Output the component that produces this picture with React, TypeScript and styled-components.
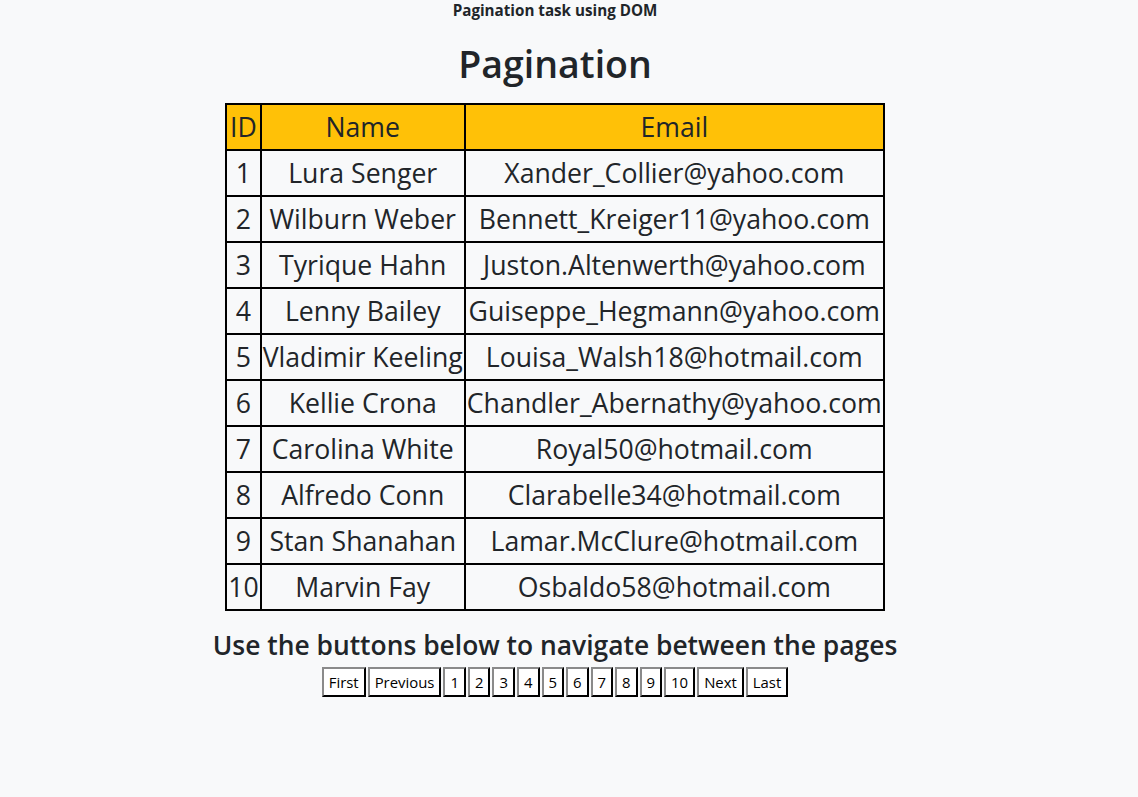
import React from "react";
import styled, { createGlobalStyle } from "styled-components";

const Global = createGlobalStyle`
  html, body { margin: 0; padding: 0; background: #f8f9fa; }
  body {
    font-family: "Open Sans", "Noto Sans", sans-serif;
    color: #212529;
  }
`;

const Page = styled.div`
  display: flex;
  flex-direction: column;
  align-items: center;
  padding-right: 28px;
`;

const TopTitle = styled.div`
  font-size: 15.2px;
  font-weight: 700;
  line-height: 21px;
`;

const Title = styled.h1`
  margin: 19px 0 15px;
  font-size: 37.5px;
  font-weight: 600;
  line-height: 48px;
`;

const Table = styled.table`
  border-collapse: collapse;
  font-size: 26.65px;
  line-height: 42px;
`;

const Th = styled.th`
  background: #ffc107;
  border: 2px solid #000;
  padding: 1px;
  font-weight: 400;
  text-align: center;
`;

const Td = styled.td`
  border: 2px solid #000;
  padding: 1px;
  text-align: center;
  white-space: nowrap;
`;

const SubTitle = styled.h4`
  margin: 19px 0 7px;
  font-size: 26.4px;
  font-weight: 600;
  line-height: 30px;
`;

const Pager = styled.div`
  display: flex;
  gap: 2px;
`;

const PageButton = styled.button`
  font-family: inherit;
  font-size: 14.9px;
  line-height: 21px;
  color: #000;
  background: #fff;
  border: 2px outset #767676;
  border-color: #8a8a8a #4a4a4a #4a4a4a #8a8a8a;
  padding: 3px 5px 2px;
  height: 30px;
  margin: 0;
  cursor: pointer;
`;

const rows: [number, string, string][] = [
  [1, "Lura Senger", "Xander_Collier@yahoo.com"],
  [2, "Wilburn Weber", "Bennett_Kreiger11@yahoo.com"],
  [3, "Tyrique Hahn", "Juston.Altenwerth@yahoo.com"],
  [4, "Lenny Bailey", "Guiseppe_Hegmann@yahoo.com"],
  [5, "Vladimir Keeling", "Louisa_Walsh18@hotmail.com"],
  [6, "Kellie Crona", "Chandler_Abernathy@yahoo.com"],
  [7, "Carolina White", "Royal50@hotmail.com"],
  [8, "Alfredo Conn", "Clarabelle34@hotmail.com"],
  [9, "Stan Shanahan", "Lamar.McClure@hotmail.com"],
  [10, "Marvin Fay", "Osbaldo58@hotmail.com"],
];

const buttons = ["First", "Previous", "1", "2", "3", "4", "5", "6", "7", "8", "9", "10", "Next", "Last"];

export default function App() {
  return (
    <>
      <Global />
      <Page>
        <TopTitle>Pagination task using DOM</TopTitle>
        <Title>Pagination</Title>
        <Table>
          <thead>
            <tr>
              <Th>ID</Th>
              <Th>Name</Th>
              <Th>Email</Th>
            </tr>
          </thead>
          <tbody>
            {rows.map(([id, name, email]) => (
              <tr key={id}>
                <Td>{id}</Td>
                <Td>{name}</Td>
                <Td>{email}</Td>
              </tr>
            ))}
          </tbody>
        </Table>
        <SubTitle>Use the buttons below to navigate between the pages</SubTitle>
        <Pager>
          {buttons.map((b) => (
            <PageButton key={b}>{b}</PageButton>
          ))}
        </Pager>
      </Page>
    </>
  );
}
